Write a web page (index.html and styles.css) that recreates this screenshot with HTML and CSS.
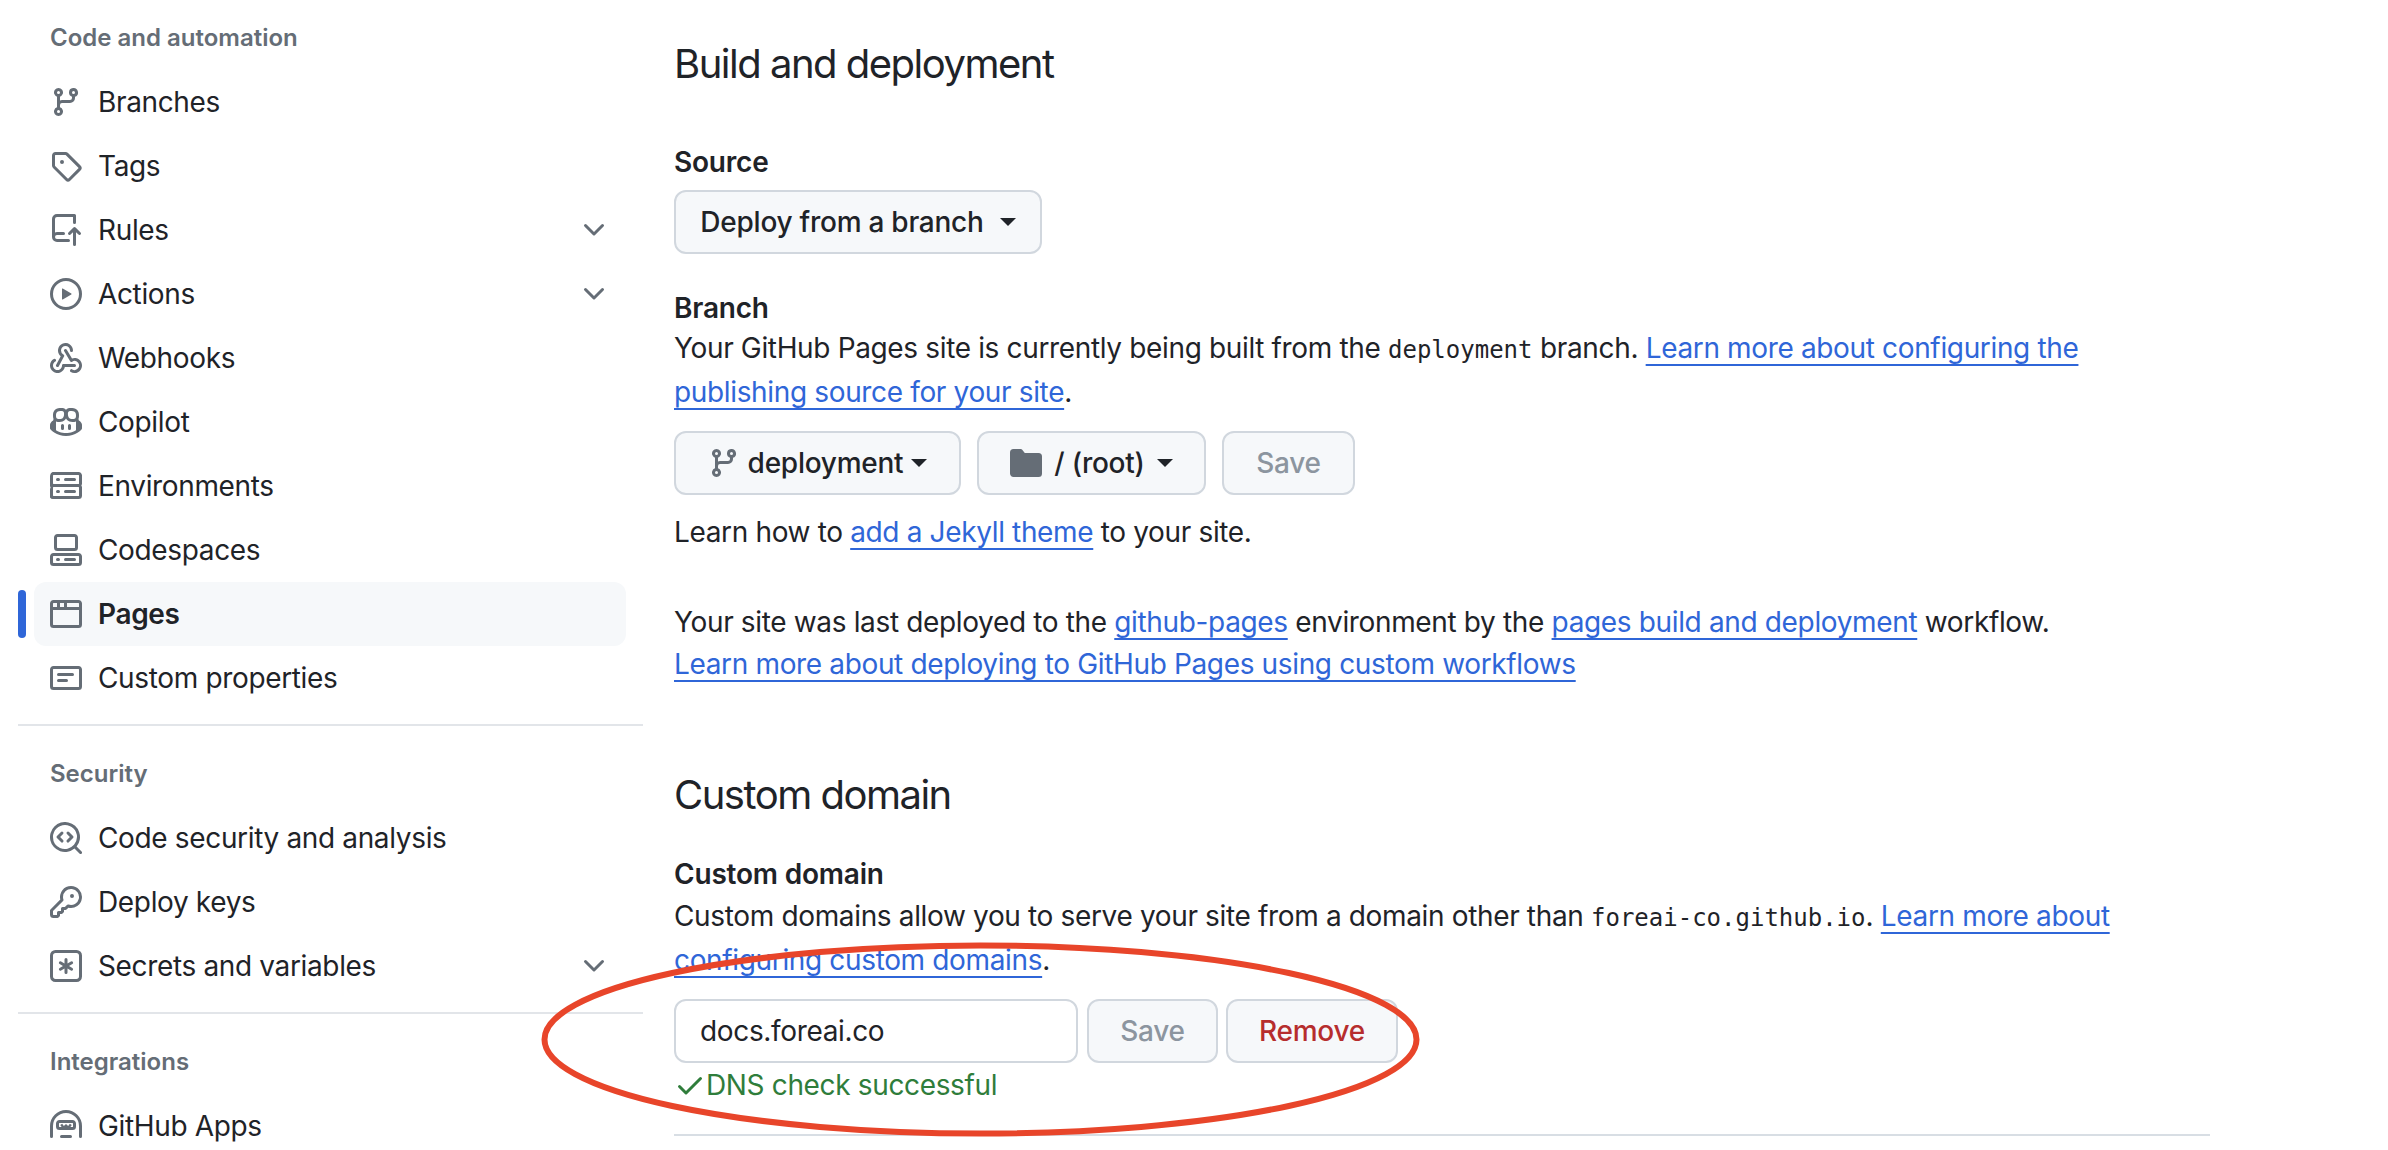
FILE: index.html
```html
<!DOCTYPE html>
<html lang="en">
<head>
  <meta charset="UTF-8">
  <title>Pages</title>
  <link rel="stylesheet" href="styles.css">
</head>
<body>
  <div class="page">
    <aside class="sidebar">
      <h3 class="nav-heading">Code and automation</h3>
      <div class="nav-item">
        <svg class="icon" viewBox="0 0 16 16"><path d="M9.5 3.25a2.25 2.25 0 1 1 3 2.122V6A2.5 2.5 0 0 1 10 8.5H6a1 1 0 0 0-1 1v1.128a2.251 2.251 0 1 1-1.5 0V5.372a2.25 2.25 0 1 1 1.5 0v1.836A2.493 2.493 0 0 1 6 7h4a1 1 0 0 0 1-1v-.628A2.25 2.25 0 0 1 9.5 3.25Zm-6 0a.75.75 0 1 0 1.5 0 .75.75 0 0 0-1.5 0Zm8.25-.75a.75.75 0 1 0 0 1.5.75.75 0 0 0 0-1.5ZM4.25 12a.75.75 0 1 0 0 1.5.75.75 0 0 0 0-1.5Z"/></svg>
        Branches
      </div>
      <div class="nav-item">
        <svg class="icon" viewBox="0 0 16 16"><path d="M1 7.775V2.75C1 1.784 1.784 1 2.75 1h5.025c.464 0 .91.184 1.238.513l6.25 6.25a1.75 1.75 0 0 1 0 2.474l-5.026 5.026a1.75 1.75 0 0 1-2.474 0l-6.25-6.25A1.752 1.752 0 0 1 1 7.775Zm1.5 0c0 .066.026.13.073.177l6.25 6.25a.25.25 0 0 0 .354 0l5.025-5.025a.25.25 0 0 0 0-.354l-6.25-6.25a.25.25 0 0 0-.177-.073H2.75a.25.25 0 0 0-.25.25ZM6 5a1 1 0 1 1 0 2 1 1 0 0 1 0-2Z"/></svg>
        Tags
      </div>
      <div class="nav-item">
        <svg class="icon" viewBox="0 0 16 16"><path d="M1 2.5A2.5 2.5 0 0 1 3.5 0h8.75a.75.75 0 0 1 .75.75v3.5a.75.75 0 0 1-1.5 0V1.5h-8a1 1 0 0 0-1 1v6.708A2.493 2.493 0 0 1 3.5 9h3.25a.75.75 0 0 1 0 1.5H3.5a1 1 0 0 0 0 2h5.75a.75.75 0 0 1 0 1.5H3.5A2.5 2.5 0 0 1 1 11.5Zm13.23 7.79h-.001l-1.224-1.224v6.184a.75.75 0 0 1-1.5 0V9.066L10.28 10.29a.75.75 0 0 1-1.06-1.061l2.505-2.504a.75.75 0 0 1 1.06 0L15.29 9.23a.751.751 0 0 1-.018 1.042.751.751 0 0 1-1.042.018Z"/></svg>
        Rules
        <svg class="chevron" viewBox="0 0 16 16"><path d="M12.78 5.22a.749.749 0 0 1 0 1.06l-4.25 4.25a.749.749 0 0 1-1.06 0L3.22 6.28a.749.749 0 1 1 1.06-1.06L8 8.939l3.72-3.719a.749.749 0 0 1 1.06 0Z"/></svg>
      </div>
      <div class="nav-item">
        <svg class="icon" viewBox="0 0 16 16"><path d="M8 0a8 8 0 1 1 0 16A8 8 0 0 1 8 0ZM1.5 8a6.5 6.5 0 1 0 13 0 6.5 6.5 0 0 0-13 0Zm4.879-2.773 4.264 2.559a.25.25 0 0 1 0 .428l-4.264 2.559A.25.25 0 0 1 6 10.559V5.442a.25.25 0 0 1 .379-.215Z"/></svg>
        Actions
        <svg class="chevron" viewBox="0 0 16 16"><path d="M12.78 5.22a.749.749 0 0 1 0 1.06l-4.25 4.25a.749.749 0 0 1-1.06 0L3.22 6.28a.749.749 0 1 1 1.06-1.06L8 8.939l3.72-3.719a.749.749 0 0 1 1.06 0Z"/></svg>
      </div>
      <div class="nav-item">
        <svg class="icon" viewBox="0 0 16 16"><path d="M5.5 4.25a2.25 2.25 0 0 1 4.5 0 .75.75 0 0 0 1.5 0 3.75 3.75 0 1 0-6.14 2.889l-2.272 4.258a.75.75 0 0 0 1.324.706L7 7.25a.75.75 0 0 0-.309-1.015A2.25 2.25 0 0 1 5.5 4.25Z"/><path d="M7.364 3.607a.75.75 0 0 1 1.03.257l2.608 4.349a3.75 3.75 0 1 1-.628 6.785.75.75 0 0 1 .752-1.299 2.25 2.25 0 1 0-.033-3.88.75.75 0 0 1-1.03-.256L7.107 4.636a.75.75 0 0 1 .257-1.03Z"/><path d="M2.9 8.776A.75.75 0 0 1 2.625 9.8 2.25 2.25 0 1 0 6 11.75a.75.75 0 0 1 .75-.751h5.5a.75.75 0 0 1 0 1.5H7.425a3.751 3.751 0 1 1-5.55-3.998.75.75 0 0 1 1.024.274Z"/></svg>
        Webhooks
      </div>
      <div class="nav-item">
        <svg class="icon" viewBox="0 0 16 16"><path d="M7.998 15.035c-4.562 0-7.873-2.914-7.998-3.749V9.338c.085-.628.677-1.686 1.588-2.065.013-.07.024-.143.036-.218.029-.183.06-.384.126-.612-.201-.508-.254-1.084-.254-1.656 0-.87.128-1.769.693-2.484.579-.733 1.494-1.124 2.724-1.261 1.206-.134 2.262.034 2.944.765.05.053.096.108.139.165.044-.057.094-.112.143-.165.682-.731 1.738-.899 2.944-.765 1.23.137 2.145.528 2.724 1.261.566.715.693 1.614.693 2.484 0 .572-.053 1.148-.254 1.656.066.228.098.429.126.612.012.076.024.148.037.218.924.385 1.522 1.471 1.591 2.095v1.872c0 .766-3.351 3.795-8.002 3.795Zm0-1.485c2.28 0 4.584-1.11 5.002-1.433V7.862l-.023-.116c-.49.21-1.075.291-1.727.291-1.146 0-2.059-.327-2.71-.991A3.222 3.222 0 0 1 8 6.303a3.24 3.24 0 0 1-.544.743c-.65.664-1.563.991-2.71.991-.652 0-1.236-.081-1.727-.291l-.023.116v4.255c.419.323 2.722 1.433 5.002 1.433ZM6.762 2.83c-.193-.206-.637-.413-1.682-.297-1.019.113-1.479.404-1.713.7-.247.312-.369.789-.369 1.554 0 .793.129 1.171.308 1.371.162.181.519.379 1.442.379.853 0 1.339-.235 1.638-.54.315-.322.527-.827.617-1.553.117-.935-.037-1.395-.241-1.614Zm4.155-.297c-1.044-.116-1.488.091-1.681.297-.204.219-.359.679-.242 1.614.091.726.303 1.231.618 1.553.299.305.784.54 1.638.54.922 0 1.28-.198 1.442-.379.179-.2.308-.578.308-1.371 0-.765-.123-1.242-.37-1.554-.233-.296-.693-.587-1.713-.7Z"/><path d="M6.25 9.037a.75.75 0 0 1 .75.75v1.501a.75.75 0 0 1-1.5 0V9.787a.75.75 0 0 1 .75-.75Zm4.25.75v1.501a.75.75 0 0 1-1.5 0V9.787a.75.75 0 0 1 1.5 0Z"/></svg>
        Copilot
      </div>
      <div class="nav-item">
        <svg class="icon" viewBox="0 0 16 16"><path d="M1.75 1h12.5c.966 0 1.75.784 1.75 1.75v4c0 .372-.116.717-.314 1 .198.283.314.628.314 1v4a1.75 1.75 0 0 1-1.75 1.75H1.75A1.75 1.75 0 0 1 0 13.75v-4c0-.372.116-.717.314-1a1.739 1.739 0 0 1-.314-1v-4C0 1.784.784 1 1.75 1ZM1.5 2.75v4c0 .138.112.25.25.25h12.5a.25.25 0 0 0 .25-.25v-4a.25.25 0 0 0-.25-.25H1.75a.25.25 0 0 0-.25.25Zm.25 5.75a.25.25 0 0 0-.25.25v4c0 .138.112.25.25.25h12.5a.25.25 0 0 0 .25-.25v-4a.25.25 0 0 0-.25-.25ZM7 4.75A.75.75 0 0 1 7.75 4h4.5a.75.75 0 0 1 0 1.5h-4.5A.75.75 0 0 1 7 4.75ZM7.75 10h4.5a.75.75 0 0 1 0 1.5h-4.5a.75.75 0 0 1 0-1.5ZM3 4.75A.75.75 0 0 1 3.75 4h.5a.75.75 0 0 1 0 1.5h-.5A.75.75 0 0 1 3 4.75ZM3.75 10h.5a.75.75 0 0 1 0 1.5h-.5a.75.75 0 0 1 0-1.5Z"/></svg>
        Environments
      </div>
      <div class="nav-item">
        <svg class="icon" viewBox="0 0 16 16"><path d="M0 11.25c0-.966.784-1.75 1.75-1.75h12.5c.966 0 1.75.784 1.75 1.75v3A1.75 1.75 0 0 1 14.25 16H1.75A1.75 1.75 0 0 1 0 14.25Zm2-9.5C2 .784 2.784 0 3.75 0h8.5C13.216 0 14 .784 14 1.75v5a1.75 1.75 0 0 1-1.75 1.75h-8.5A1.75 1.75 0 0 1 2 6.75Zm1.75-.25a.25.25 0 0 0-.25.25v5c0 .138.112.25.25.25h8.5a.25.25 0 0 0 .25-.25v-5a.25.25 0 0 0-.25-.25Zm-2 9.5a.25.25 0 0 0-.25.25v3c0 .138.112.25.25.25h12.5a.25.25 0 0 0 .25-.25v-3a.25.25 0 0 0-.25-.25Z"/><path d="M7 12.75a.75.75 0 0 1 .75-.75h4.5a.75.75 0 0 1 0 1.5h-4.5a.75.75 0 0 1-.75-.75Zm-4 0a.75.75 0 0 1 .75-.75h.5a.75.75 0 0 1 0 1.5h-.5a.75.75 0 0 1-.75-.75Z"/></svg>
        Codespaces
      </div>
      <div class="nav-item active">
        <svg class="icon" viewBox="0 0 16 16"><path d="M0 2.75C0 1.784.784 1 1.75 1h12.5c.966 0 1.75.784 1.75 1.75v10.5A1.75 1.75 0 0 1 14.25 15H1.75A1.75 1.75 0 0 1 0 13.25ZM14.5 6h-13v7.25c0 .138.112.25.25.25h12.5a.25.25 0 0 0 .25-.25Zm-6-3.5v2h6V2.75a.25.25 0 0 0-.25-.25ZM5 2.5v2h2v-2Zm-3.25 0a.25.25 0 0 0-.25.25V4.5h2v-2Z"/></svg>
        Pages
      </div>
      <div class="nav-item">
        <svg class="icon" viewBox="0 0 16 16"><path d="M0 3.75C0 2.784.784 2 1.75 2h12.5c.966 0 1.75.784 1.75 1.75v8.5A1.75 1.75 0 0 1 14.25 14H1.75A1.75 1.75 0 0 1 0 12.25Zm1.75-.25a.25.25 0 0 0-.25.25v8.5c0 .138.112.25.25.25h12.5a.25.25 0 0 0 .25-.25v-8.5a.25.25 0 0 0-.25-.25ZM3.5 6.25a.75.75 0 0 1 .75-.75h7a.75.75 0 0 1 0 1.5h-7a.75.75 0 0 1-.75-.75Zm.75 2.25h4a.75.75 0 0 1 0 1.5h-4a.75.75 0 0 1 0-1.5Z"/></svg>
        Custom properties
      </div>
      <hr class="nav-divider">
      <h3 class="nav-heading">Security</h3>
      <div class="nav-item">
        <svg class="icon" viewBox="0 0 16 16"><path d="M8.47 4.97a.75.75 0 0 0 0 1.06L9.94 7.5 8.47 8.97a.75.75 0 1 0 1.06 1.06l2-2a.75.75 0 0 0 0-1.06l-2-2a.75.75 0 0 0-1.06 0ZM6.53 6.03a.75.75 0 0 0-1.06-1.06l-2 2a.75.75 0 0 0 0 1.06l2 2a.75.75 0 1 0 1.06-1.06L5.06 7.5l1.47-1.47Z"/><path d="M12.246 13.307a7.501 7.501 0 1 1 1.06-1.06l2.474 2.473a.749.749 0 0 1-.326 1.275.749.749 0 0 1-.734-.215ZM1.5 7.5a6.002 6.002 0 0 0 3.5 5.455 6.002 6.002 0 0 0 7-1.58 6.002 6.002 0 0 0 1.5-3.875 6 6 0 0 0-12 0Z"/></svg>
        Code security and analysis
      </div>
      <div class="nav-item">
        <svg class="icon" viewBox="0 0 16 16"><path d="M10.5 0a5.499 5.499 0 1 1-1.288 10.848l-.932.932a.749.749 0 0 1-.53.22H7v.75a.749.749 0 0 1-.22.53l-.5.5a.749.749 0 0 1-.53.22H5v.75a.749.749 0 0 1-.22.53l-.5.5a.749.749 0 0 1-.53.22h-2A1.75 1.75 0 0 1 0 14.25v-2c0-.199.079-.389.22-.53l4.932-4.932A5.5 5.5 0 0 1 10.5 0Zm-4 5.5c-.001.431.069.86.205 1.269a.75.75 0 0 1-.181.768L1.5 12.56v1.69c0 .138.112.25.25.25h1.69l.06-.06v-1.19a.75.75 0 0 1 .75-.75h1.19l.06-.06v-1.19a.75.75 0 0 1 .75-.75h1.19l1.023-1.025a.75.75 0 0 1 .768-.18A4 4 0 1 0 6.5 5.5ZM11 6a1 1 0 1 1 0-2 1 1 0 0 1 0 2Z"/></svg>
        Deploy keys
      </div>
      <div class="nav-item">
        <svg class="icon" viewBox="0 0 16 16"><path d="M0 2.75A2.75 2.75 0 0 1 2.75 0h10.5A2.75 2.75 0 0 1 16 2.75v10.5A2.75 2.75 0 0 1 13.25 16H2.75A2.75 2.75 0 0 1 0 13.25ZM2.75 1.5c-.69 0-1.25.56-1.25 1.25v10.5c0 .69.56 1.25 1.25 1.25h10.5c.69 0 1.25-.56 1.25-1.25V2.75c0-.69-.56-1.25-1.25-1.25Z"/><path d="M8 4a.75.75 0 0 1 .75.75V6.7l1.69-.975a.75.75 0 0 1 .75 1.3L9.5 8l1.69.976a.75.75 0 0 1-.75 1.298L8.75 9.3v1.951a.75.75 0 0 1-1.5 0V9.299l-1.69.976a.75.75 0 0 1-.75-1.3L6.5 8l-1.69-.975a.75.75 0 0 1 .75-1.3l1.69.976V4.75A.75.75 0 0 1 8 4Z"/></svg>
        Secrets and variables
        <svg class="chevron" viewBox="0 0 16 16"><path d="M12.78 5.22a.749.749 0 0 1 0 1.06l-4.25 4.25a.749.749 0 0 1-1.06 0L3.22 6.28a.749.749 0 1 1 1.06-1.06L8 8.939l3.72-3.719a.749.749 0 0 1 1.06 0Z"/></svg>
      </div>
      <hr class="nav-divider">
      <h3 class="nav-heading">Integrations</h3>
      <div class="nav-item">
        <svg class="icon" viewBox="0 0 16 16"><path d="M0 8a8 8 0 0 1 16 0v5.25a.75.75 0 0 1-1.5 0V8a6.5 6.5 0 1 0-13 0v5.25a.75.75 0 0 1-1.5 0Zm3-1.25C3 5.784 3.784 5 4.75 5h6.5c.966 0 1.75.784 1.75 1.75v1.5A1.75 1.75 0 0 1 11.25 10h-6.5A1.75 1.75 0 0 1 3 8.25Zm1.75-.25a.25.25 0 0 0-.25.25v1.5c0 .138.112.25.25.25h6.5a.25.25 0 0 0 .25-.25v-1.5a.25.25 0 0 0-.25-.25ZM5.75 12.5h4.5a.75.75 0 0 1 0 1.5h-4.5a.75.75 0 0 1 0-1.5Z"/><path class="hubot-mouth" d="M5.6 7.2 6.8 8.9 8 7.8 9.2 8.9 10.4 7.2"/></svg>
        GitHub Apps
      </div>
    </aside>

    <main class="content">
      <h2 class="section-title">Build and deployment</h2>
      <div class="field-label source-label">Source</div>
      <button class="btn source-btn">Deploy from a branch <span class="caret source-caret"></span></button>

      <div class="field-label branch-label">Branch</div>
      <p>Your GitHub Pages site is currently being built from the <code>deployment</code> branch. <a href="#">Learn more about configuring the<br>publishing source for your site</a>.</p>
      <div class="btn-row">
        <button class="btn branch-btn">
          <svg class="icon" viewBox="0 0 16 16"><path d="M9.5 3.25a2.25 2.25 0 1 1 3 2.122V6A2.5 2.5 0 0 1 10 8.5H6a1 1 0 0 0-1 1v1.128a2.251 2.251 0 1 1-1.5 0V5.372a2.25 2.25 0 1 1 1.5 0v1.836A2.493 2.493 0 0 1 6 7h4a1 1 0 0 0 1-1v-.628A2.25 2.25 0 0 1 9.5 3.25Zm-6 0a.75.75 0 1 0 1.5 0 .75.75 0 0 0-1.5 0Zm8.25-.75a.75.75 0 1 0 0 1.5.75.75 0 0 0 0-1.5ZM4.25 12a.75.75 0 1 0 0 1.5.75.75 0 0 0 0-1.5Z"/></svg>
          deployment <span class="caret"></span>
        </button>
        <button class="btn folder-btn">
          <svg class="icon" viewBox="0 0 16 16"><path d="M1.75 1A1.75 1.75 0 0 0 0 2.75v10.5C0 14.216.784 15 1.75 15h12.5A1.75 1.75 0 0 0 16 13.25v-8.5A1.75 1.75 0 0 0 14.25 3H7.5a.25.25 0 0 1-.2-.1l-.9-1.2C6.07 1.26 5.55 1 5 1H1.75Z"/></svg>
          / (root) <span class="caret"></span>
        </button>
        <button class="btn save-btn" disabled>Save</button>
      </div>
      <p class="theme-note">Learn how to <a href="#">add a Jekyll theme</a> to your site.</p>
      <p class="deploy-note">Your site was last deployed to the <a href="#">github-pages</a> environment by the <a href="#">pages build and deployment</a> workflow.<br><a href="#">Learn more about deploying to GitHub Pages using custom workflows</a></p>

      <h2 class="section-title domain-title">Custom domain</h2>
      <div class="field-label domain-label">Custom domain</div>
      <p>Custom domains allow you to serve your site from a domain other than <code>foreai-co.github.io</code>. <a href="#">Learn more about<br>configuring custom domains</a>.</p>
      <form class="domain-form">
        <input class="domain-input" type="text" value="docs.foreai.co">
        <button class="btn domain-save" type="button" disabled>Save</button>
        <button class="btn remove-btn" type="button">Remove</button>
      </form>
      <div class="dns-ok">
        <svg class="check" viewBox="0 0 16 16"><path d="M13.78 4.22a.75.75 0 0 1 0 1.06l-7.25 7.25a.75.75 0 0 1-1.06 0L2.22 9.28a.751.751 0 0 1 .018-1.042.751.751 0 0 1 1.042-.018L6 10.94l6.72-6.72a.75.75 0 0 1 1.06 0Z"/></svg>DNS check successful
      </div>
      <hr class="section-divider">
    </main>
  </div>

  <!-- hand drawn circle around the custom domain form -->
  <svg class="annotation" viewBox="0 0 2388 1150"><ellipse cx="980.5" cy="1039.5" rx="436" ry="94"/></svg>
</body>
</html>
```

FILE: styles.css
```css
html, body {
  margin: 0;
  height: 1150px;
  overflow: hidden;
  background-color: #fff;
}

body {
  position: relative;
  color: #1f2328;
  font-family: Inter, Roboto, "Liberation Sans", sans-serif;
  font-size: 28px;
  letter-spacing: -0.35px;
  line-height: 42px;
}

.page {
  display: flex;
}

/* Sidebar */
.sidebar {
  flex: none;
  width: 625px;
  margin-left: 18px;
  padding-top: 20px;
}

.nav-heading {
  margin: 0 0 14px 32px;
  color: #656d76;
  font-size: 24px;
  font-weight: 600;
  letter-spacing: 0;
  line-height: 36px;
}

.nav-item {
  position: relative;
  display: flex;
  align-items: center;
  gap: 16px;
  height: 64px;
  margin: 0 17px 0 16px;
  padding: 0 16px;
  border-radius: 12px;
}

.nav-item.active {
  background-color: #f6f8fa;
  font-weight: 600;
}

.nav-item.active::before {
  content: "";
  position: absolute;
  left: -16px;
  top: 8px;
  width: 8px;
  height: 48px;
  border-radius: 4px;
  background-color: #2f66d8;
}

.icon {
  flex: none;
  width: 32px;
  height: 32px;
  fill: #656d76;
}

.hubot-mouth {
  fill: none;
  stroke: #656d76;
  stroke-width: 1.2;
}

.chevron {
  flex: none;
  width: 32px;
  height: 32px;
  margin-left: auto;
  fill: #656d76;
}

.nav-divider {
  height: 2px;
  margin: 14px 0 30px;
  border: 0;
  background-color: #e2e5e9;
}

/* Main column */
.content {
  flex: none;
  width: 1536px;
  margin-left: 31px;
}

.section-title {
  margin: 34px 0 0;
  font-size: 40px;
  font-weight: 400;
  letter-spacing: -1.5px;
  line-height: 60px;
}

.field-label {
  font-weight: 600;
  letter-spacing: -0.2px;
}

.source-label {
  margin-top: 47px;
}

.branch-label {
  margin: 33px 0 -2px;
}

p {
  margin: 0;
}

a {
  color: #2f66d8;
  text-decoration-thickness: 2px;
  text-underline-offset: 6px;
}

code {
  font-family: "DejaVu Sans Mono", monospace;
  font-size: 24px;
  letter-spacing: 0;
}

.btn {
  display: inline-flex;
  align-items: center;
  justify-content: center;
  box-sizing: border-box;
  height: 64px;
  padding: 0;
  border: 2px solid #d1d7de;
  border-radius: 12px;
  background-color: #f6f8fa;
  color: #1f2328;
  font-family: inherit;
  font-size: 28px;
  font-weight: 500;
  letter-spacing: -0.25px;
}

.source-btn {
  display: flex;
  width: 368px;
  margin-top: 7px;
}

.caret {
  display: inline-block;
  width: 0;
  height: 0;
  border-top: 8px solid #1f2328;
  border-left: 8px solid transparent;
  border-right: 8px solid transparent;
}

.source-caret {
  margin-left: 16px;
}

.btn-row {
  display: flex;
  gap: 16px;
  margin-top: 18px;
}

.branch-btn {
  width: 287px;
  gap: 8px;
}

.folder-btn {
  width: 229px;
  gap: 12px;
}

.save-btn {
  width: 133px;
  color: #8c959f;
}

.theme-note {
  margin-top: 16px;
}

.deploy-note {
  margin-top: 48px;
}

.domain-title {
  margin-top: 80px;
}

.domain-label {
  margin: 28px 0 0;
}

.domain-form {
  display: flex;
  margin-top: 18px;
}

.domain-input {
  box-sizing: border-box;
  width: 404px;
  height: 64px;
  padding: 0 24px;
  border: 2px solid #d1d7de;
  border-radius: 12px;
  color: #1f2328;
  font-family: inherit;
  font-size: 28px;
  letter-spacing: inherit;
}

.domain-save {
  width: 131px;
  margin-left: 9px;
  color: #8c959f;
}

.remove-btn {
  width: 172px;
  margin-left: 8px;
  color: #b62d2d;
}

.dns-ok {
  display: flex;
  align-items: center;
  height: 42px;
  margin-top: 1px;
  color: #2f7d3b;
}

.check {
  width: 32px;
  height: 32px;
  fill: #2f7d3b;
}

.section-divider {
  height: 2px;
  margin: 28px 0 0;
  border: 0;
  background-color: #d8dee4;
}

/* Red marker on top of the screenshot */
.annotation {
  position: absolute;
  left: 0;
  top: 0;
  width: 2388px;
  height: 1150px;
  fill: none;
  stroke: #e8452a;
  stroke-width: 6;
  pointer-events: none;
}
```
